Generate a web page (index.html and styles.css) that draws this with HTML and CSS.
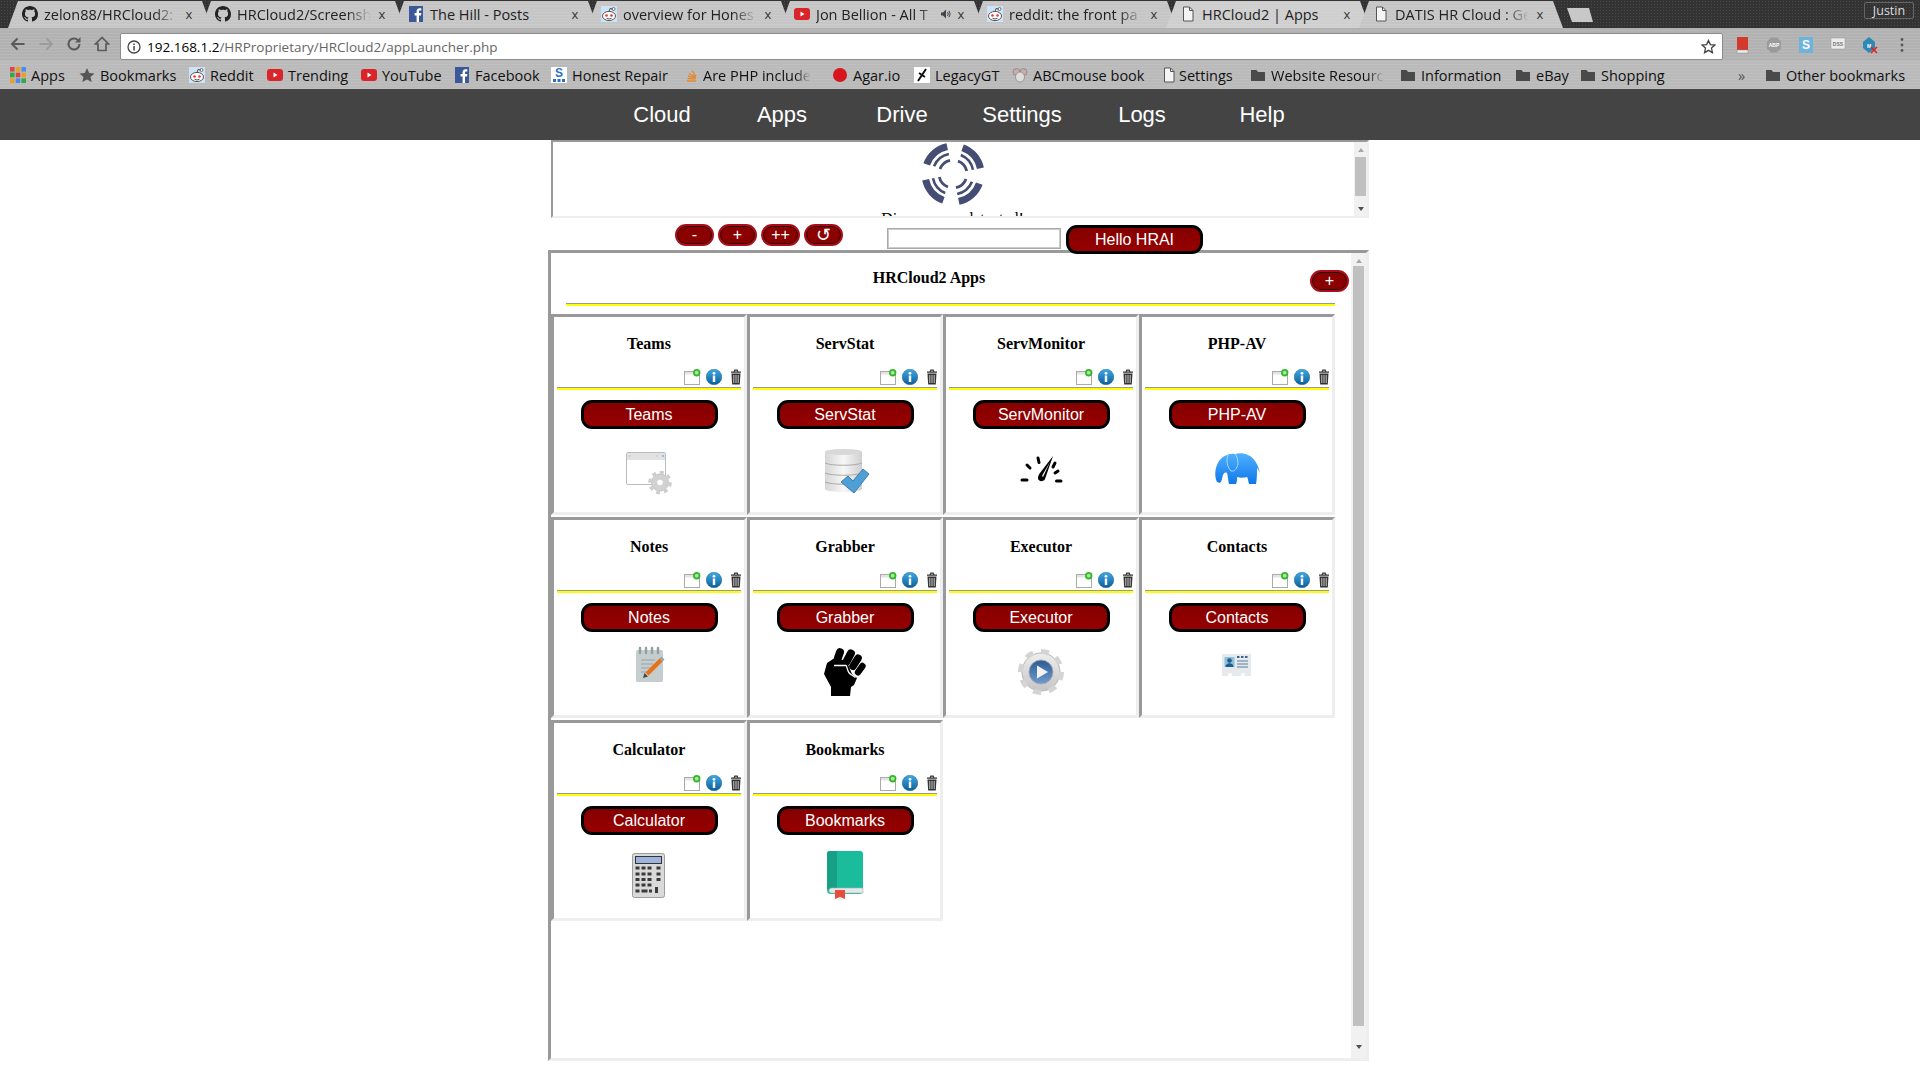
FILE: index.html
```html
<!DOCTYPE html>
<html lang="en">
<head>
    <meta charset="UTF-8">
    <title>HRCloud2 | Apps</title>
    <link rel="stylesheet" href="styles.css">
</head>
<body>

<svg class="defs" aria-hidden="true">
    <defs>
        <linearGradient id="gBlue" x1="0" y1="0" x2="0" y2="1"><stop offset="0" stop-color="#3fa9e6"/><stop offset="1" stop-color="#0b5f9a"/></linearGradient>
        <linearGradient id="gPlay" x1="0" y1="0" x2="0" y2="1"><stop offset="0" stop-color="#2b5a94"/><stop offset="1" stop-color="#6f9bd0"/></linearGradient>
        <linearGradient id="gEle" x1="0" y1="0" x2="0" y2="1"><stop offset="0" stop-color="#4fb0ff"/><stop offset="1" stop-color="#0f78ea"/></linearGradient>
        <linearGradient id="gSteel" x1="0" y1="0" x2="0" y2="1"><stop offset="0" stop-color="#eeeeee"/><stop offset="1" stop-color="#c5c5c5"/></linearGradient>
        <linearGradient id="gDisk" x1="0" y1="0" x2="1" y2="0"><stop offset="0" stop-color="#d6d6d6"/><stop offset=".5" stop-color="#f7f7f7"/><stop offset="1" stop-color="#cfcfcf"/></linearGradient>
        <symbol id="github" viewBox="0 0 16 16"><path fill="#222" d="M8 0C3.58 0 0 3.58 0 8c0 3.54 2.29 6.53 5.47 7.59.4.07.55-.17.55-.38 0-.19-.01-.82-.01-1.49-2.01.37-2.53-.49-2.69-.94-.09-.23-.48-.94-.82-1.13-.28-.15-.68-.52-.01-.53.63-.01 1.08.58 1.23.82.72 1.21 1.87.87 2.33.66.07-.52.28-.87.51-1.07-1.78-.2-3.64-.89-3.64-3.95 0-.87.31-1.59.82-2.15-.08-.2-.36-1.02.08-2.12 0 0 .67-.21 2.2.82.64-.18 1.32-.27 2-.27.68 0 1.36.09 2 .27 1.53-1.04 2.2-.82 2.2-.82.44 1.1.16 1.92.08 2.12.51.56.82 1.27.82 2.15 0 3.07-1.87 3.75-3.65 3.95.29.25.54.73.54 1.48 0 1.07-.01 1.93-.01 2.2 0 .21.15.46.55.38A8.013 8.013 0 0016 8c0-4.42-3.58-8-8-8z"/></symbol>
        <symbol id="fb" viewBox="0 0 16 16"><rect x="1" width="14" height="16" fill="#3b5998"/><path fill="#fff" d="M11 16V9.500h2l.3-2.400H11V5.600c0-.7.2-1.100 1.100-1.100h1.200V2.300C13 2.300 12.400 2.200 11.600 2.200 9.800 2.200 8.600 3.300 8.600 5.300v1.800H6.600v2.400h2V16z"/></symbol>
        <symbol id="reddit" viewBox="0 0 16 16"><rect width="16" height="16" fill="#cee3f8"/><ellipse cx="8" cy="10" rx="6.500" ry="4.600" fill="#fff" stroke="#555"/><circle cx="12.500" cy="3" r="1.500" fill="#fff" stroke="#555" stroke-width=".8"/><path d="M8 5.500L9 2.500l3 .5" fill="none" stroke="#555"/><circle cx="5.500" cy="9.500" r="1.300" fill="#e33"/><circle cx="10.500" cy="9.500" r="1.300" fill="#e33"/><path d="M5.500 12.300q2.500 1.400 5 0" fill="none" stroke="#555"/></symbol>
        <symbol id="yt" viewBox="0 0 16 16"><rect y="2" width="16" height="12" rx="3" fill="#d9252a"/><path d="M6.500 5.500v5l4-2.500z" fill="#fff"/></symbol>
        <symbol id="page" viewBox="0 0 16 16"><path d="M3.500 1h6l3.500 3.500v10.500h-9.500z" fill="#f4f4f4" stroke="#555"/><path d="M9.500 1v3.500h3.500" fill="none" stroke="#555"/></symbol>
        <symbol id="folder" viewBox="0 0 16 16"><path d="M1 3h5.500l1.500 2h7v9h-14z" fill="#4a4a4a"/></symbol>
        <symbol id="newwin" viewBox="0 0 17 16"><rect x=".5" y="2.500" width="15" height="13" fill="#fff" stroke="#aaa"/><rect x="1" y="3" width="14" height="2.500" fill="#e4e4e4"/><circle cx="12.700" cy="3.700" r="3.700" fill="#35b52a"/><circle cx="12.700" cy="3.700" r="1.900" fill="#a8e89c"/></symbol>
        <symbol id="info" viewBox="0 0 16 16"><circle cx="8" cy="8" r="7.800" fill="url(#gBlue)" stroke="#0a4f80" stroke-width=".4"/><rect x="6.800" y="6.500" width="2.400" height="6.500" fill="#fff"/><circle cx="8" cy="4.300" r="1.400" fill="#fff"/></symbol>
        <symbol id="trash" viewBox="0 0 12 16"><path d="M1 3.200h10M4.200 2.800l.6-1.600h2.400l.6 1.600" fill="none" stroke="#333" stroke-width="1.200"/><path d="M1.500 4.500h9l-.7 11h-7.600z" fill="#333"/><path d="M3.800 6v8M6 6v8M8.200 6v8" stroke="#ddd" stroke-width=".9"/></symbol>
    </defs>
</svg>

<div class="tabstrip">
    <div class="tab"><svg class="fav"><use href="#github"/></svg><span class="tab-title">zelon88/HRCloud2:</span><span class="tab-x">x</span></div>
    <div class="tab"><svg class="fav"><use href="#github"/></svg><span class="tab-title">HRCloud2/Screensh</span><span class="tab-x">x</span></div>
    <div class="tab"><svg class="fav"><use href="#fb"/></svg><span class="tab-title tab-solid">The Hill - Posts</span><span class="tab-x">x</span></div>
    <div class="tab"><svg class="fav"><use href="#reddit"/></svg><span class="tab-title">overview for Hones</span><span class="tab-x">x</span></div>
    <div class="tab"><svg class="fav"><use href="#yt"/></svg><span class="tab-title">Jon Bellion - All T</span>
        <svg class="tab-sound" viewBox="0 0 10 10"><path d="M0 3.500h2l3-3v9l-3-3h-2z" fill="#444"/><path d="M6.500 3q1.500 2 0 4M8 1.800q2.400 3.200 0 6.400" fill="none" stroke="#444"/></svg>
        <span class="tab-x tab-x-near">x</span></div>
    <div class="tab"><svg class="fav"><use href="#reddit"/></svg><span class="tab-title">reddit: the front pa</span><span class="tab-x">x</span></div>
    <div class="tab tab-active"><svg class="fav"><use href="#page"/></svg><span class="tab-title tab-solid">HRCloud2 | Apps</span><span class="tab-x">x</span></div>
    <div class="tab"><svg class="fav"><use href="#page"/></svg><span class="tab-title">DATIS HR Cloud : Ge</span><span class="tab-x">x</span></div>
    <div class="newtab"></div>
    <div class="profile">Justin</div>
</div>

<div class="toolbar">
    <div class="navbtns">
        <svg viewBox="0 0 16 16"><path d="M14.500 8h-12M7.500 2.500L2 8l5.500 5.500" fill="none" stroke="#5a5a5a" stroke-width="2"/></svg>
        <svg viewBox="0 0 16 16"><path d="M1.500 8h12M8.500 2.500L14 8l-5.500 5.500" fill="none" stroke="#9c9c9c" stroke-width="2"/></svg>
        <svg viewBox="0 0 16 16"><path d="M13.500 8a5.500 5.500 0 1 1-1.700-4" fill="none" stroke="#5a5a5a" stroke-width="2"/><path d="M14.500 1v5.500h-5.500z" fill="#5a5a5a"/></svg>
        <svg viewBox="0 0 16 16"><path d="M8 1.500L1.500 8h2.500v6.500h8v-6.500h2.500z" fill="none" stroke="#5a5a5a" stroke-width="1.700"/></svg>
    </div>
    <div class="omnibox">
        <svg class="omni-info" viewBox="0 0 14 14"><circle cx="7" cy="7" r="6" fill="none" stroke="#444" stroke-width="1.300"/><rect x="6.300" y="6" width="1.500" height="4.500" fill="#444"/><rect x="6.300" y="3.500" width="1.500" height="1.500" fill="#444"/></svg>
        <span class="url"><b>192.168.1.2</b>/HRProprietary/HRCloud2/appLauncher.php</span>
        <svg class="omni-star" viewBox="0 0 16 16"><path d="M8 1.500l2 4.500 4.800.5-3.600 3.200 1 4.800L8 12.100l-4.200 2.400 1-4.800L1.200 6.500 6 6z" fill="none" stroke="#444" stroke-width="1.400"/></svg>
    </div>
    <div class="extensions">
        <svg viewBox="0 0 16 18"><rect x="3" y="1" width="11" height="15" fill="#d33a2c"/><rect x="3" y="14" width="11" height="3" fill="#eee" stroke="#888" stroke-width=".5"/></svg>
        <svg viewBox="0 0 16 18"><path d="M5 1.500h6l4 4v7l-4 4h-6l-4-4v-7z" fill="#9a9a9a"/><text class="ext-text" x="8" y="11">ABP</text></svg>
        <svg viewBox="0 0 16 18"><rect x="1" y="1" width="14" height="16" fill="#6db3dc"/><text class="ext-text ext-s" x="8" y="13">S</text></svg>
        <svg viewBox="0 0 16 18"><rect x="1" y="2" width="14" height="11" fill="#ececec" stroke="#999" stroke-width=".5"/><text class="ext-text ext-d" x="8" y="10">DSS</text></svg>
        <svg viewBox="0 0 16 18"><path d="M7 1l6 5v6l-6 5-6-5v-6z" fill="#2d88b5"/><text class="ext-text" x="7" y="12">M</text><path d="M9 11l6 6M15 11l-6 6" stroke="#d22" stroke-width="1.600"/></svg>
        <svg viewBox="0 0 16 18"><circle cx="8" cy="3.500" r="1.400" fill="#555"/><circle cx="8" cy="9" r="1.400" fill="#555"/><circle cx="8" cy="14.500" r="1.400" fill="#555"/></svg>
    </div>
</div>

<div class="bookmarks">
    <a class="bm bm-apps"><svg class="apps-grid" viewBox="0 0 14 14"><rect width="4" height="4" fill="#d44"/><rect x="5" width="4" height="4" fill="#e9a21b"/><rect x="10" width="4" height="4" fill="#4a8af4"/><rect y="5" width="4" height="4" fill="#2fa84f"/><rect x="5" y="5" width="4" height="4" fill="#d44"/><rect x="10" y="5" width="4" height="4" fill="#e9a21b"/><rect y="10" width="4" height="4" fill="#e9a21b"/><rect x="5" y="10" width="4" height="4" fill="#4a8af4"/><rect x="10" y="10" width="4" height="4" fill="#2fa84f"/></svg>Apps</a>
    <a class="bm bm-star"><svg viewBox="0 0 16 16"><path d="M8 1l2.200 4.900 5.300.5-4 3.500 1.200 5.200L8 12.400l-4.700 2.700 1.200-5.200-4-3.500 5.300-.5z" fill="#555"/></svg>Bookmarks</a>
    <a class="bm bm-reddit"><svg><use href="#reddit"/></svg>Reddit</a>
    <a class="bm bm-trending"><svg><use href="#yt"/></svg>Trending</a>
    <a class="bm bm-youtube"><svg><use href="#yt"/></svg>YouTube</a>
    <a class="bm bm-facebook"><svg><use href="#fb"/></svg>Facebook</a>
    <a class="bm bm-honest"><svg viewBox="0 0 16 16"><rect width="16" height="16" fill="#fff"/><text class="bm-s" x="8" y="10">S</text><rect x="2" y="12" width="3" height="3" fill="#2a6fc4"/><rect x="6.500" y="12" width="3" height="3" fill="#2a6fc4"/><rect x="11" y="12" width="3" height="3" fill="#2a6fc4"/></svg>Honest Repair</a>
    <a class="bm bm-php"><svg class="bm-php-icon" viewBox="0 0 16 16"><path d="M3 14h9M3.500 11.500l8 .7M4 9l7.800 2M5 6.500l7 3.600M8 3.500l4 6" stroke="#e58a2e" stroke-width="1.300" fill="none"/></svg><span class="bm-fade">Are PHP include</span></a>
    <a class="bm bm-agar"><svg viewBox="0 0 16 16"><circle cx="8" cy="8" r="7" fill="#d8141d"/></svg>Agar.io</a>
    <a class="bm bm-legacy"><svg viewBox="0 0 16 16"><rect width="16" height="16" fill="#fff"/><path d="M12 2L4 14M5 6l6 4" stroke="#111" stroke-width="2"/></svg>LegacyGT</a>
    <a class="bm bm-abc"><svg viewBox="0 0 16 16"><circle cx="4.500" cy="5" r="3.500" fill="#caa" stroke="#777" stroke-width=".6"/><circle cx="11.500" cy="5" r="3.500" fill="#caa" stroke="#777" stroke-width=".6"/><ellipse cx="8" cy="10" rx="4.500" ry="5" fill="#ddd" stroke="#777" stroke-width=".6"/></svg>ABCmouse book</a>
    <a class="bm bm-settings"><svg class="bm-page"><use href="#page"/></svg>Settings</a>
    <a class="bm bm-website"><svg><use href="#folder"/></svg><span class="bm-fade">Website Resourc</span></a>
    <a class="bm bm-info"><svg><use href="#folder"/></svg>Information</a>
    <a class="bm bm-ebay"><svg><use href="#folder"/></svg>eBay</a>
    <a class="bm bm-shopping"><svg><use href="#folder"/></svg>Shopping</a>
    <span class="bm-more">»</span>
    <a class="bm bm-other"><svg><use href="#folder"/></svg>Other bookmarks</a>
</div>

<nav class="topnav">
    <a>Cloud</a>
    <a>Apps</a>
    <a>Drive</a>
    <a>Settings</a>
    <a>Logs</a>
    <a>Help</a>
</nav>

<main class="page">
    <div class="frame status-frame">
        <div class="status-body">
            <svg class="logo" viewBox="-32 -32 64 64">
                <g id="blade" fill="none" stroke="#454d75">
                    <path d="M-26.300 -9.600A28 28 0 0 1 -5.800 -27.400" stroke-width="7"/>
                    <path d="M-20.400 -8.400A22 22 0 0 1 -4.500 -21.500" stroke-width="2.800" transform="scale(.93)"/>
                    <path d="M-13 -5A14 14 0 0 1 -3 -13.700" stroke-width="2.800"/>
                </g>
                <use href="#blade" transform="rotate(90)"/>
                <use href="#blade" transform="rotate(180)"/>
                <use href="#blade" transform="rotate(270)"/>
            </svg>
            <p class="status-text">Discrepancy detected!</p>
        </div>
        <div class="scrollbar status-scroll">
            <span class="arrow-up"></span>
            <span class="thumb"></span>
            <span class="arrow-down"></span>
        </div>
    </div>

    <div class="controls">
        <button class="pill">-</button>
        <button class="pill">+</button>
        <button class="pill">++</button>
        <button class="pill pill-reload">↺</button>
        <input class="search" type="text">
        <button class="action hello">Hello HRAI</button>
    </div>

    <div class="frame apps-frame">
        <div class="apps-body">
            <div class="apps-head">
                <h2>HRCloud2 Apps</h2>
                <button class="pill add-app">+</button>
            </div>
            <div class="rule apps-rule"></div>

            <div class="app-grid">
                <section class="card">
                    <h3>Teams</h3>
                    <div class="card-tools"><svg class="t-new"><use href="#newwin"/></svg><svg class="t-info"><use href="#info"/></svg><svg class="t-trash"><use href="#trash"/></svg></div>
                    <div class="rule"></div>
                    <button class="action">Teams</button>
                    <svg class="app-icon" viewBox="0 0 64 64">
                        <rect x="9.500" y="12.500" width="39" height="32" rx="1.500" fill="#fff" stroke="#bbb"/>
                        <rect x="10" y="13" width="38" height="7" fill="#e2e2e2"/>
                        <circle cx="12.500" cy="16" r="1" fill="#ccc"/><circle cx="40" cy="16" r="1" fill="#ccc"/><circle cx="46" cy="16" r="1" fill="#7db4e8"/>
                        <circle cx="43" cy="42.500" r="8.500" fill="#d2d2d2" stroke="#c4c4c4" stroke-width="1"/>
                        <circle cx="43" cy="42.500" r="10.300" fill="none" stroke="#cdcdcd" stroke-width="3" stroke-dasharray="4 4"/>
                        <circle cx="43" cy="42.500" r="2.800" fill="#fff"/>
                    </svg>
                </section>

                <section class="card">
                    <h3>ServStat</h3>
                    <div class="card-tools"><svg class="t-new"><use href="#newwin"/></svg><svg class="t-info"><use href="#info"/></svg><svg class="t-trash"><use href="#trash"/></svg></div>
                    <div class="rule"></div>
                    <button class="action">ServStat</button>
                    <svg class="app-icon" viewBox="0 0 64 64">
                        <path d="M12 12c0-4 37-4 37 0v37c0 4-37 4-37 0z" fill="url(#gDisk)"/>
                        <ellipse cx="30.500" cy="12" rx="18.500" ry="3" fill="#d8d8d8"/>
                        <path d="M12 23c6 3 31 3 37 0M12 33c6 3 31 3 37 0M12 42c6 3 31 3 37 0" fill="none" stroke="#aaa"/>
                        <path d="M28 42l7-6 5 5 10-12 6 5-15 19z" fill="#4d9fd6" stroke="#3b7fae"/>
                    </svg>
                </section>

                <section class="card">
                    <h3>ServMonitor</h3>
                    <div class="card-tools"><svg class="t-new"><use href="#newwin"/></svg><svg class="t-info"><use href="#info"/></svg><svg class="t-trash"><use href="#trash"/></svg></div>
                    <div class="rule"></div>
                    <button class="action">ServMonitor</button>
                    <svg class="app-icon" viewBox="0 0 64 64">
                        <path d="M44 16L36 39c-1 3-7 3-7-1 0-2 1-4 2-5zM41 22l-7 12c-1 1-1 3 0 3z"/>
                        <path d="M13 40h5M18 25l3 3M29 18l1 4.500M46 23l-2 4M49 31l-3 2M47.500 41h4.500" stroke="#000" stroke-width="3" stroke-linecap="round"/>
                    </svg>
                </section>

                <section class="card">
                    <h3>PHP-AV</h3>
                    <div class="card-tools"><svg class="t-new"><use href="#newwin"/></svg><svg class="t-info"><use href="#info"/></svg><svg class="t-trash"><use href="#trash"/></svg></div>
                    <div class="rule"></div>
                    <button class="action">PHP-AV</button>
                    <svg class="app-icon" viewBox="0 0 64 64">
                        <path d="M12 42C9 36 10 27 14 21c4-5 10-8 16-7 4-1 9-1 13 1 7 3 10 10 12 18-1-2-2-4-3-5 0 5 0 11-1 16h-7c-1-3-1-6-2-7-3 1-7 1-10 0 0 3 0 5-1 7h-7c-1-4-1-8-2-11-2-1-3 0-4 2-1 3-1 6-3 8z" fill="url(#gEle)"/>
                        <path d="M23 15c-2 5-1 12 3 16 4 1 6-3 7-7 0-4-1-8-3-10" fill="none" stroke="#a9dbff"/>
                    </svg>
                </section>

                <section class="card">
                    <h3>Notes</h3>
                    <div class="card-tools"><svg class="t-new"><use href="#newwin"/></svg><svg class="t-info"><use href="#info"/></svg><svg class="t-trash"><use href="#trash"/></svg></div>
                    <div class="rule"></div>
                    <button class="action">Notes</button>
                    <svg class="app-icon" viewBox="0 0 64 64">
                        <rect x="19" y="7" width="27" height="32" rx="1.500" fill="#c6cdce"/>
                        <path d="M23 5v5M29 5v5M35 5v5M41 5v5" stroke="#93a0a2" stroke-width="2.500" stroke-linecap="round"/>
                        <path d="M24 17h14M24 21h12M24 25h9M24 29h6" stroke="#97a3a5"/>
                        <path d="M30 31l14-14" stroke="#e6731a" stroke-width="4.500"/>
                        <path d="M44 17l2-2" stroke="#9aa5a6" stroke-width="4.500"/>
                        <path d="M26 35l1.500-5 3.500 3.500z" fill="#444"/>
                    </svg>
                </section>

                <section class="card">
                    <h3>Grabber</h3>
                    <div class="card-tools"><svg class="t-new"><use href="#newwin"/></svg><svg class="t-info"><use href="#info"/></svg><svg class="t-trash"><use href="#trash"/></svg></div>
                    <div class="rule"></div>
                    <button class="action">Grabber</button>
                    <svg class="app-icon" viewBox="0 0 64 64">
                        <path d="M11 31l3-11 9-6 11 5 5 12 5 4-3 7-3 2-1 9h-19v-9z"/>
                        <rect x="22" y="5" width="8" height="14" rx="4" transform="rotate(20 26 12)"/>
                        <rect x="32" y="6" width="8" height="17" rx="4" transform="rotate(28 36 14)"/>
                        <rect x="39" y="11" width="7.500" height="17" rx="3.700" transform="rotate(32 43 19)"/>
                        <rect x="44" y="19" width="6.500" height="14" rx="3.200" transform="rotate(35 47 26)"/>
                        <path d="M21 22.500h12c2 3 1 7 5 9l4.500 3" fill="none" stroke="#fff" stroke-width="1.300"/>
                    </svg>
                </section>

                <section class="card">
                    <h3>Executor</h3>
                    <div class="card-tools"><svg class="t-new"><use href="#newwin"/></svg><svg class="t-info"><use href="#info"/></svg><svg class="t-trash"><use href="#trash"/></svg></div>
                    <div class="rule"></div>
                    <button class="action">Executor</button>
                    <svg class="app-icon" viewBox="0 0 64 64">
                        <circle cx="32" cy="29" r="19" fill="url(#gSteel)" stroke="#b5b5b5"/>
                        <circle cx="32" cy="29" r="20.500" fill="none" stroke="#d4d4d4" stroke-width="5" stroke-dasharray="8 8"/>
                        <circle cx="32" cy="29" r="12" fill="url(#gPlay)" stroke="#a9a9a9"/>
                        <path d="M28 22.500v13l11-6.500z" fill="#f2f2f2"/>
                    </svg>
                </section>

                <section class="card">
                    <h3>Contacts</h3>
                    <div class="card-tools"><svg class="t-new"><use href="#newwin"/></svg><svg class="t-info"><use href="#info"/></svg><svg class="t-trash"><use href="#trash"/></svg></div>
                    <div class="rule"></div>
                    <button class="action">Contacts</button>
                    <svg class="app-icon" viewBox="0 0 64 64">
                        <rect x="17" y="11" width="29" height="22" fill="#e6eaec"/>
                        <rect x="19.500" y="14" width="10" height="10" fill="#8cc0dd"/>
                        <circle cx="24.500" cy="17.500" r="2.300" fill="#1d5d8f"/>
                        <path d="M20.500 24c0-5 8-5 8 0z" fill="#1d5d8f"/>
                        <path d="M32 14h2.500M36 14h2.500M40 14h2.500" stroke="#3d6488" stroke-width="2"/>
                        <path d="M32 18h11M32 21h11M32 24h11" stroke="#5a7c9c"/>
                        <circle cx="25" cy="32" r="2" fill="#fff"/><circle cx="38" cy="32" r="2" fill="#fff"/>
                    </svg>
                </section>

                <section class="card">
                    <h3>Calculator</h3>
                    <div class="card-tools"><svg class="t-new"><use href="#newwin"/></svg><svg class="t-info"><use href="#info"/></svg><svg class="t-trash"><use href="#trash"/></svg></div>
                    <div class="rule"></div>
                    <button class="action">Calculator</button>
                    <svg class="app-icon" viewBox="0 0 64 64">
                        <rect x="15.500" y="7.500" width="32" height="44" rx="2" fill="#d9d9d9" stroke="#9c9c9c"/>
                        <rect x="18" y="10" width="27" height="8" fill="#333"/>
                        <rect x="19" y="11" width="25" height="6" fill="#9db4dc"/>
                        <g class="calc-keys">
                            <path d="M18.500 22h4M24.500 22h4M30.500 22h4M39.500 22h4"/>
                            <path d="M18.500 28h4M24.500 28h4M30.500 28h4M39.500 28h4"/>
                            <path d="M18.500 33.500h4M24.500 33.500h4M30.500 33.500h4M39.500 33.500h4"/>
                            <path d="M18.500 39h4M24.500 39h4M30.500 39h4"/>
                            <path d="M18.500 45h4M24.500 45h6M32 45h3M39.500 41v6"/>
                        </g>
                    </svg>
                </section>

                <section class="card">
                    <h3>Bookmarks</h3>
                    <div class="card-tools"><svg class="t-new"><use href="#newwin"/></svg><svg class="t-info"><use href="#info"/></svg><svg class="t-trash"><use href="#trash"/></svg></div>
                    <div class="rule"></div>
                    <button class="action">Bookmarks</button>
                    <svg class="app-icon" viewBox="0 0 64 64">
                        <path d="M16 5h31a3 3 0 0 1 3 3v36a4 4 0 0 1-4 4h-28a4 4 0 0 1-4-4v-36a3 3 0 0 1 2-3z" fill="#1abc9c"/>
                        <path d="M17 5h7v38h-10v-35a3 3 0 0 1 3-3z" fill="#17a085"/>
                        <path d="M16 45c0-2 1-3 3-3h31v5h-31c-2 0-3-1-3-2z" fill="#e4e8e8" stroke="#a5b1b1" stroke-width=".6"/>
                        <path d="M22 44h10v9l-5-2-5 2z" fill="#e74c3c"/>
                    </svg>
                </section>
            </div>
        </div>
        <div class="scrollbar apps-scroll">
            <span class="arrow-up"></span>
            <span class="thumb"></span>
            <span class="arrow-down"></span>
        </div>
    </div>
</main>

</body>
</html>
```

FILE: styles.css
```css
body {
    margin: 0;
    background: #fff;
    font-family: "Liberation Serif", serif;
    color: #000;
}
.defs {
    display: block;
    width: 0;
    height: 0;
}

/* browser chrome */
.tabstrip {
    display: flex;
    height: 28px;
    padding: 0 0 0 8px;
    background-color: #333;
    background-image: radial-gradient(#4a4a4a 1px, transparent 1px);
    background-size: 3px 3px;
    font-family: "Open Sans", sans-serif;
    font-size: 14.5px;
    color: #222;
}
.tab {
    display: flex;
    align-items: center;
    flex: none;
    box-sizing: border-box;
    width: 204px;
    margin-right: -11px;
    padding: 0 18px 0 14px;
    background-color: #c6c6c6;
    background-image: repeating-linear-gradient(0deg, rgba(255,255,255,.07) 0 1px, transparent 1px 3px);
    clip-path: polygon(10px 1px, 194px 1px, 204px 100%, 0 100%);
}
.tab-active {
    background-color: #cfcfcf;
}
.fav {
    flex: none;
    width: 16px;
    height: 16px;
    margin-right: 6px;
}
.tab-title {
    flex: 1;
    min-width: 0;
    white-space: nowrap;
    -webkit-mask-image: linear-gradient(90deg, #000 82%, transparent);
    mask-image: linear-gradient(90deg, #000 82%, transparent);
}
.tab-solid {
    -webkit-mask-image: none;
    mask-image: none;
}
.tab-sound {
    flex: none;
    width: 10px;
    height: 10px;
    margin-right: 5px;
}
.tab-x {
    flex: none;
    width: 10px;
    margin-left: 6px;
    font-size: 13px;
    color: #333;
    text-align: center;
}
.tab-x-near {
    margin-left: 0;
}
.newtab {
    flex: none;
    width: 26px;
    height: 14px;
    margin: 8px 0 0 15px;
    background: #c8c8c8;
    clip-path: polygon(0 0, 22px 0, 100% 100%, 5px 100%);
}
.profile {
    flex: none;
    box-sizing: border-box;
    width: 50px;
    height: 17px;
    margin: 2px 6px 0 auto;
    border: 1px solid #666;
    border-radius: 2px;
    color: #ddd;
    font-size: 12.5px;
    line-height: 15px;
    text-align: center;
}
.toolbar {
    display: flex;
    height: 33px;
    padding-left: 10px;
    background-color: #b2b2b2;
    background-image: repeating-linear-gradient(0deg, rgba(255,255,255,.08) 0 1px, transparent 1px 3px);
}
.navbtns {
    display: flex;
    gap: 12px;
    width: 110px;
    padding-top: 8px;
}
.navbtns svg {
    width: 16px;
    height: 16px;
}
.omnibox {
    display: flex;
    align-items: center;
    box-sizing: border-box;
    width: 1603px;
    height: 27px;
    margin-top: 5px;
    padding: 0 6px 0 6px;
    background: #fff;
    border: 1px solid #8c8c8c;
    border-radius: 2px;
}
.omni-info {
    width: 14px;
    height: 14px;
    margin-right: 6px;
}
.url {
    flex: 1;
    font-family: "Open Sans", sans-serif;
    font-size: 13.5px;
    color: #666;
}
.url b {
    font-weight: 400;
    color: #000;
}
.omni-star {
    width: 15px;
    height: 15px;
}
.extensions {
    display: flex;
    gap: 14px;
    padding: 8px 0 0 10px;
}
.extensions svg {
    width: 18px;
    height: 18px;
}
.ext-text {
    font-family: "Liberation Sans", sans-serif;
    font-size: 5px;
    font-weight: 700;
    fill: #fff;
    text-anchor: middle;
}
.ext-s {
    font-size: 12px;
}
.ext-d {
    fill: #777;
}
.bookmarks {
    display: flex;
    align-items: center;
    height: 28px;
    padding-left: 10px;
    background-color: #bababa;
    background-image: repeating-linear-gradient(0deg, rgba(255,255,255,.08) 0 1px, transparent 1px 3px);
    font-family: "Open Sans", sans-serif;
    font-size: 14.5px;
    color: #111;
    white-space: nowrap;
}
.bm {
    display: flex;
    flex: none;
    align-items: center;
    gap: 5px;
}
.bm svg {
    flex: none;
    width: 16px;
    height: 16px;
}
/* bookmark buttons sit on chrome's own measured widths */
.bm-apps { width: 69px; }
.bm-star { width: 110px; }
.bm-reddit { width: 78px; }
.bm-trending { width: 94px; }
.bm-youtube { width: 93px; }
.bm-facebook { width: 97px; }
.bm-honest { width: 133px; }
.bm-php { width: 148px; }
.bm-agar { width: 82px; }
.bm-legacy { width: 98px; }
.bm-abc { width: 149px; }
.bm-settings { width: 89px; }
.bm-website { width: 150px; }
.bm-info { width: 115px; }
.bm-ebay { width: 65px; }
.bm-shopping { width: 158px; }
.bm-other { width: 150px; margin-left: 19px; }
.bm .bm-php-icon {
    margin-right: -2px;
}
.bm .bm-page {
    margin-right: -3px;
}
.bm-fade {
    flex: none;
    -webkit-mask-image: linear-gradient(90deg, #000 85%, transparent);
    mask-image: linear-gradient(90deg, #000 85%, transparent);
}
.bm-s {
    font-family: "Liberation Sans", sans-serif;
    font-size: 12px;
    font-weight: 700;
    fill: #2a6fc4;
    text-anchor: middle;
}
.bm-more {
    flex: none;
    width: 8px;
    color: #555;
}
.topnav {
    display: flex;
    justify-content: center;
    height: 51px;
    padding-left: 4px;
    background: #444;
    font-family: "Liberation Sans", sans-serif;
    font-size: 22px;
    line-height: 51px;
}
.topnav a {
    width: 120px;
    color: #fff;
    text-align: center;
}

/* page */
.page {
    margin-left: 548px;
    width: 821px;
}
.frame {
    display: flex;
    box-sizing: border-box;
    border-style: solid;
    border-color: #999 #eee #eee #999;
}
.status-frame {
    height: 78px;
    margin-left: 3px;
    border-width: 2px;
    overflow: hidden;
}
.status-body {
    flex: 1;
    min-width: 0;
    overflow: hidden;
    text-align: center;
}
.logo {
    display: block;
    width: 64px;
    height: 64px;
    margin-left: 368px;
}
.status-text {
    margin: 4px 0 0;
    padding-right: 2px;
    font-size: 16px;
    line-height: 18px;
}
.scrollbar {
    display: flex;
    flex: none;
    flex-direction: column;
    align-items: center;
    background: #f1f1f1;
}
.thumb {
    display: block;
    background: #c0c0c0;
}
.arrow-up, .arrow-down {
    display: block;
    width: 0;
    height: 0;
    border-left: 3.5px solid transparent;
    border-right: 3.5px solid transparent;
}
.arrow-up {
    border-bottom: 4px solid #a8a8a8;
}
.arrow-down {
    border-top: 4px solid #505050;
}
.status-scroll {
    width: 13px;
    padding: 6px 0 0;
}
.status-scroll .thumb {
    width: 11px;
    height: 39px;
    margin: 5px 0 11px;
}
.controls {
    display: flex;
    align-items: flex-start;
    height: 32px;
    padding-left: 127px;
    font-family: "Liberation Sans", sans-serif;
}
.pill {
    flex: none;
    box-sizing: border-box;
    width: 39px;
    height: 22px;
    margin: 6px 4px 0 0;
    padding: 0;
    background: #8b0000;
    border: 2px solid #a80f1a;
    border-radius: 11px;
    box-shadow: inset 0 0 0 1px #2a0000;
    color: #fff;
    font-family: "Liberation Sans", sans-serif;
    font-size: 16px;
    line-height: 18px;
}
.pill-reload {
    font-size: 18px;
}
.search {
    box-sizing: border-box;
    width: 174px;
    height: 21px;
    margin: 10px 5px 0 40px;
    padding: 0;
    border: 1px solid #aaa;
    outline: 1px solid #ccc;
    outline-offset: -2px;
}
.action {
    display: block;
    box-sizing: border-box;
    width: 137px;
    height: 29px;
    padding: 0;
    background: linear-gradient(#850000, #960000);
    border: 3px solid #000;
    border-radius: 11px;
    color: #fff;
    font-family: "Liberation Sans", sans-serif;
    font-size: 16px;
}
.hello {
    position: relative;
    z-index: 1;
    margin-top: 7px;
}
.apps-frame {
    height: 811px;
    border-width: 3px;
}
.apps-body {
    flex: 1;
    min-width: 0;
}
.apps-head {
    display: flex;
    height: 50px;
}
.apps-head h2 {
    flex: 1;
    margin: 16px 0 0;
    font-size: 16px;
    line-height: 18px;
    text-align: center;
}
.add-app {
    margin: 17px 2px 0 3px;
}
.rule {
    height: 3px;
    background: #ff0;
    border-top: 1px solid #999;
    box-sizing: border-box;
}
.apps-rule {
    margin: 0 15px 0 15px;
    width: 769px;
}
.app-grid {
    display: grid;
    grid-template-columns: repeat(4, 196px);
    grid-auto-rows: 201px;
    row-gap: 2px;
    margin-top: 8px;
}
.card {
    box-sizing: border-box;
    border: 3px solid;
    border-color: #999 #eee #eee #999;
    text-align: center;
}
.card h3 {
    margin: 18px 0 0;
    font-size: 16px;
    line-height: 18px;
}
.card-tools {
    display: flex;
    justify-content: flex-end;
    height: 16px;
    margin: 16px 2px 0 0;
}
.t-new {
    width: 17px;
    height: 16px;
}
.t-info {
    width: 16px;
    height: 16px;
    margin-left: 5px;
}
.t-trash {
    width: 12px;
    height: 16px;
    margin-left: 8px;
}
.card .rule {
    margin: 2px 3px 0;
}
.card .action {
    margin: 10px auto 0;
}
.app-icon {
    display: block;
    width: 64px;
    height: 64px;
    margin: 11px auto 0;
}
.calc-keys path {
    fill: none;
    stroke: #3a3a3a;
    stroke-width: 3;
}
.apps-scroll {
    width: 15px;
    padding-top: 6px;
}
.apps-scroll .thumb {
    width: 11px;
    height: 760px;
    margin: 3px 0 19px;
}
```
